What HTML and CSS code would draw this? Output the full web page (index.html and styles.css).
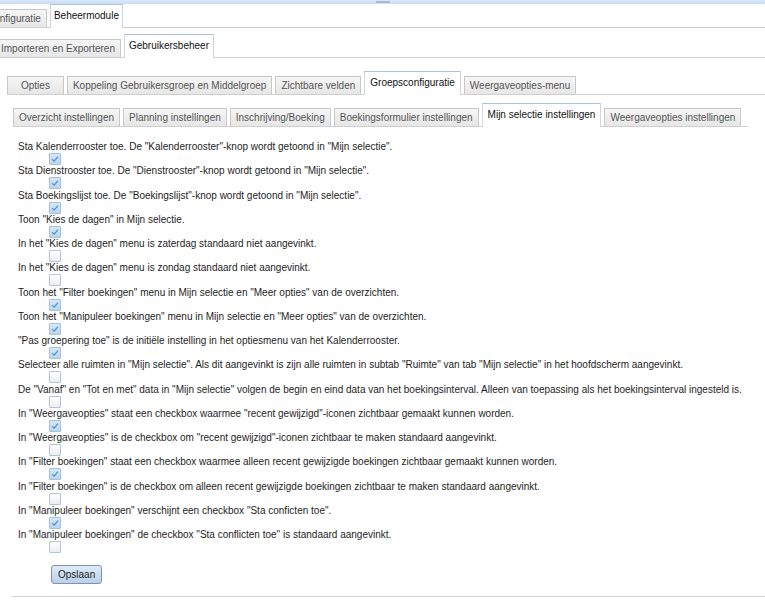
FILE: index.html
```html
<!DOCTYPE html>
<html>
  <head>
    <title>Beheermodule - Mijn selectie instellingen</title>
    <link rel="stylesheet" href="styles.css">
  </head>
  <body>
    <div class="topbar"><span class="grip"></span></div>

    <div class="tabs tabs-main">
      <span class="tab tab-cut">Configuratie</span>
      <span class="tab active">Beheermodule</span>
    </div>

    <div class="tabs tabs-sub">
      <span class="tab tab-cut2">Importeren en Exporteren</span>
      <span class="tab active">Gebruikersbeheer</span>
    </div>

    <div class="tabs tabs-group">
      <span class="tab tab-wide">Opties</span>
      <span class="tab">Koppeling Gebruikersgroep en Middelgroep</span>
      <span class="tab">Zichtbare velden</span>
      <span class="tab active">Groepsconfiguratie</span>
      <span class="tab">Weergaveopties-menu</span>
    </div>

    <div class="tabs tabs-select">
      <span class="tab">Overzicht instellingen</span>
      <span class="tab">Planning instellingen</span>
      <span class="tab">Inschrijving/Boeking</span>
      <span class="tab">Boekingsformulier instellingen</span>
      <span class="tab active">Mijn selectie instellingen</span>
      <span class="tab">Weergaveopties instellingen</span>
    </div>

    <div class="panel">
      <div class="option">
        <div class="label">Sta Kalenderrooster toe. De "Kalenderrooster"-knop wordt getoond in "Mijn selectie".</div>
        <span class="cb checked"><svg viewBox="0 0 12 12"><path d="M2.5 6.2 L5 8.6 L9.6 3.2"/></svg></span>
      </div>
      <div class="option">
        <div class="label">Sta Dienstrooster toe. De "Dienstrooster"-knop wordt getoond in "Mijn selectie".</div>
        <span class="cb checked"><svg viewBox="0 0 12 12"><path d="M2.5 6.2 L5 8.6 L9.6 3.2"/></svg></span>
      </div>
      <div class="option">
        <div class="label">Sta Boekingslijst toe. De "Boekingslijst"-knop wordt getoond in "Mijn selectie".</div>
        <span class="cb checked"><svg viewBox="0 0 12 12"><path d="M2.5 6.2 L5 8.6 L9.6 3.2"/></svg></span>
      </div>
      <div class="option">
        <div class="label">Toon "Kies de dagen" in Mijn selectie.</div>
        <span class="cb checked"><svg viewBox="0 0 12 12"><path d="M2.5 6.2 L5 8.6 L9.6 3.2"/></svg></span>
      </div>
      <div class="option">
        <div class="label">In het "Kies de dagen" menu is zaterdag standaard niet aangevinkt.</div>
        <span class="cb"></span>
      </div>
      <div class="option">
        <div class="label">In het "Kies de dagen" menu is zondag standaard niet aangevinkt.</div>
        <span class="cb"></span>
      </div>
      <div class="option">
        <div class="label">Toon het "Filter boekingen" menu in Mijn selectie en "Meer opties" van de overzichten.</div>
        <span class="cb checked"><svg viewBox="0 0 12 12"><path d="M2.5 6.2 L5 8.6 L9.6 3.2"/></svg></span>
      </div>
      <div class="option">
        <div class="label">Toon het "Manipuleer boekingen" menu in Mijn selectie en "Meer opties" van de overzichten.</div>
        <span class="cb checked"><svg viewBox="0 0 12 12"><path d="M2.5 6.2 L5 8.6 L9.6 3.2"/></svg></span>
      </div>
      <div class="option">
        <div class="label">"Pas groepering toe" is de initiële instelling in het optiesmenu van het Kalenderrooster.</div>
        <span class="cb checked"><svg viewBox="0 0 12 12"><path d="M2.5 6.2 L5 8.6 L9.6 3.2"/></svg></span>
      </div>
      <div class="option">
        <div class="label">Selecteer alle ruimten in "Mijn selectie". Als dit aangevinkt is zijn alle ruimten in subtab "Ruimte" van tab "Mijn selectie" in het hoofdscherm aangevinkt.</div>
        <span class="cb"></span>
      </div>
      <div class="option">
        <div class="label">De "Vanaf" en "Tot en met" data in "Mijn selectie" volgen de begin en eind data van het boekingsinterval. Alleen van toepassing als het boekingsinterval ingesteld is.</div>
        <span class="cb"></span>
      </div>
      <div class="option">
        <div class="label">In "Weergaveopties" staat een checkbox waarmee "recent gewijzigd"-iconen zichtbaar gemaakt kunnen worden.</div>
        <span class="cb checked"><svg viewBox="0 0 12 12"><path d="M2.5 6.2 L5 8.6 L9.6 3.2"/></svg></span>
      </div>
      <div class="option">
        <div class="label">In "Weergaveopties" is de checkbox om "recent gewijzigd"-iconen zichtbaar te maken standaard aangevinkt.</div>
        <span class="cb"></span>
      </div>
      <div class="option">
        <div class="label">In "Filter boekingen" staat een checkbox waarmee alleen recent gewijzigde boekingen zichtbaar gemaakt kunnen worden.</div>
        <span class="cb checked"><svg viewBox="0 0 12 12"><path d="M2.5 6.2 L5 8.6 L9.6 3.2"/></svg></span>
      </div>
      <div class="option">
        <div class="label">In "Filter boekingen" is de checkbox om alleen recent gewijzigde boekingen zichtbaar te maken standaard aangevinkt.</div>
        <span class="cb"></span>
      </div>
      <div class="option">
        <div class="label">In "Manipuleer boekingen" verschijnt een checkbox "Sta conficten toe".</div>
        <span class="cb checked"><svg viewBox="0 0 12 12"><path d="M2.5 6.2 L5 8.6 L9.6 3.2"/></svg></span>
      </div>
      <div class="option">
        <div class="label">In "Manipuleer boekingen" de checkbox "Sta conflicten toe" is standaard aangevinkt.</div>
        <span class="cb"></span>
      </div>
      <button class="save">Opslaan</button>
    </div>
  </body>
</html>
```

FILE: styles.css
```css
body {
  margin: 0;
  font-family: "Liberation Sans", Arial, sans-serif;
  font-size: 10px;
  color: #1e1e1e;
  background: #ffffff;
  overflow: hidden;
}
.topbar {
  height: 4px;
  background: linear-gradient(#d9e8f8, #c8ddf4);
  display: flex;
  justify-content: center;
}
.grip {
  width: 14px;
  height: 2px;
  margin-top: 1px;
  background: #a9bad0;
}
.tabs {
  display: flex;
  align-items: flex-end;
  gap: 3px;
  border-bottom: 1px solid #cfcfcf;
}
.tab {
  height: 17px;
  line-height: 17px;
  padding: 0 5px;
  border: 1px solid #c8c8c8;
  border-bottom: none;
  background: linear-gradient(#f6f6f6, #e6e6e6);
  color: #555555;
  white-space: nowrap;
}
.tab.active {
  height: 22px;
  line-height: 22px;
  padding-bottom: 1px;
  margin-bottom: -1px;
  background: #ffffff;
  color: #111111;
  border-color: #cfd6de;
  border-top: 1px solid #a8c2e0;
}
.tabs-main {
  margin-left: -19px;
}
.tabs-main .tab.active {
  padding: 0 3px 1px;
}
.tabs-sub {
  margin-top: 6px;
  margin-left: -5px;
}
.tabs-sub .tab.active {
  padding: 0 4px 1px;
}
.tabs-group {
  margin-top: 13px;
  margin-left: 7px;
}
.tab-wide {
  padding: 0 13px;
}
.tabs-select {
  margin-top: 8px;
  margin-left: 13px;
  margin-right: 17px;
}
.panel {
  margin-left: 12px;
  padding: 14px 0 12px 6px;
  border-bottom: 1px solid #cdd0e2;
}
.option {
  height: 24.25px;
}
.label {
  line-height: 12px;
  height: 12px;
  white-space: nowrap;
}
.cb {
  display: block;
  box-sizing: border-box;
  width: 12px;
  height: 12px;
  margin-left: 31px;
  border: 1px solid #b7c4d4;
  border-radius: 1px;
  background: linear-gradient(#ffffff, #e9eef4);
}
.cb.checked {
  border-color: #a7bfd9;
  background: linear-gradient(#d6e8f8, #b9d5f0);
}
.cb svg {
  display: block;
  width: 10px;
  height: 10px;
}
.cb path {
  fill: none;
  stroke: #4a8fd0;
  stroke-width: 1.5;
}
.save {
  display: block;
  margin: 12px 0 0 33px;
  height: 19px;
  padding: 0 6px;
  font-family: "Liberation Sans", Arial, sans-serif;
  font-size: 10px;
  color: #1e1e1e;
  border: 1px solid #7f93ab;
  border-radius: 3px;
  background: linear-gradient(#dfebf7, #b9d0ea);
}
```
